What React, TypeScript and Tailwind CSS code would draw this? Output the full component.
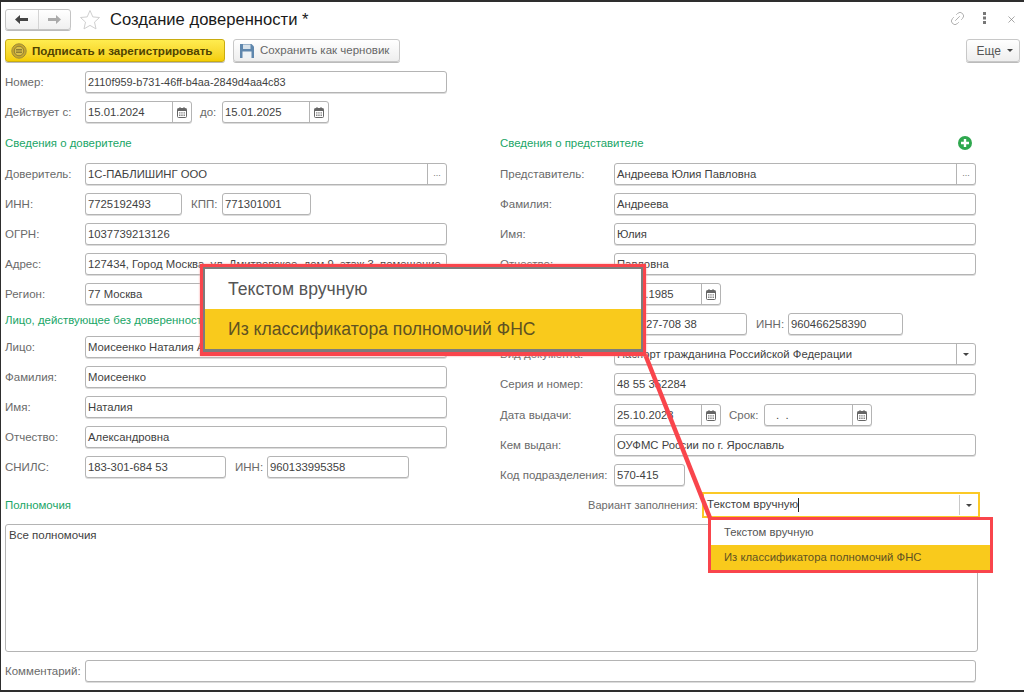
import { Link2, X } from 'lucide-react';
import { ReactNode } from 'react';

const Calendar = () => (
  <svg width="10" height="11" viewBox="0 0 10 11">
    <path d="M2.5 0h1v2h-1zM6.5 0h1v2h-1z" fill="#666" />
    <rect x="0.5" y="1.5" width="9" height="9" rx="1" fill="#fff" stroke="#666" />
    <rect x="0.5" y="1.5" width="9" height="2.5" fill="#666" />
    <path d="M2 5.2h1.5v1.3H2zM4.2 5.2h1.5v1.3H4.2zM6.5 5.2H8v1.3H6.5zM2 7.6h1.5v1.3H2zM4.2 7.6h1.5v1.3H4.2zM6.5 7.6H8v1.3H6.5z" fill="#888" />
  </svg>
);

const Caret = () => <span className="w-0 h-0 border-x-[3px] border-x-transparent border-t-[3px] border-t-[#444]" />;

const Field = ({
  value,
  className = 'flex-1',
  suffix,
  suffixClass = 'w-[19px]',
}: {
  value?: ReactNode;
  className?: string;
  suffix?: ReactNode;
  suffixClass?: string;
}) => (
  <div className={`h-[22px] flex items-stretch bg-white border border-[#b4b4b4] rounded-[3px] shadow-[0_1px_0_#dcdcdc] overflow-hidden min-w-0 ${className}`}>
    <div className="flex-1 min-w-0 px-[2px] leading-[20px] text-[11.3px] text-[#3f3f3f] whitespace-nowrap overflow-hidden">{value}</div>
    {suffix && <div className={`shrink-0 border-l border-[#b4b4b4] flex items-center justify-center ${suffixClass}`}>{suffix}</div>}
  </div>
);

const Label = ({ children, className = 'w-20' }: { children: ReactNode; className?: string }) => (
  <div className={`shrink-0 leading-[22px] text-[#6a6a6a] whitespace-nowrap ${className}`}>{children}</div>
);

const Row = ({ children, className = '' }: { children: ReactNode; className?: string }) => (
  <div className={`flex items-center h-[22px] ${className}`}>{children}</div>
);

const Section = ({ children, className = '' }: { children: ReactNode; className?: string }) => (
  <div className={`flex items-center pt-px text-[11.4px] text-[#18a566] whitespace-nowrap overflow-hidden ${className}`}>{children}</div>
);

const Dots = <span className="text-[9px] text-[#777] leading-none -mt-px">...</span>;

const Options = ({ className, big }: { className: string; big?: boolean }) => (
  <div className={`absolute bg-white ${className}`}>
    <div className={big ? 'h-[40px] pl-[23px] flex items-center text-[#555]' : 'h-[25px] pl-[13px] flex items-center text-[#555]'}>Текстом вручную</div>
    <div className={big ? 'h-[40px] pl-[23px] flex items-center bg-[#f9ca1c] text-[#5f5222]' : 'h-[25px] pl-[13px] flex items-center bg-[#f9ca1c] text-[#5f5222]'}>Из классификатора полномочий ФНС</div>
  </div>
);

export default function App() {
  return (
    <div className="relative w-[1024px] h-[692px] box-border bg-white border-t-2 border-l border-b-2 border-[#2e2e2e] px-[4px] pt-[7px] overflow-hidden font-['Liberation_Sans',Arial,sans-serif] text-[11.5px]">
      {/* header */}
      <div className="flex items-center h-[21px]">
        <div className="w-[66px] h-[21px] flex bg-gradient-to-b from-white to-[#f0f0f0] border border-[#c4c4c4] rounded-[3px] shadow-[0_1px_0_#bbb]">
          <div className="flex-1 flex items-center justify-center border-r border-[#d4d4d4]">
            <svg width="13" height="9" viewBox="0 0 13 9"><path d="M5 0v3h8v3H5v3L0 4.5z" fill="#444" /></svg>
          </div>
          <div className="flex-1 flex items-center justify-center">
            <svg width="13" height="9" viewBox="0 0 13 9"><path d="M8 0v3H0v3h8v3l5-4.5z" fill="#aaa" /></svg>
          </div>
        </div>
        <svg className="ml-[8px]" width="22" height="21" viewBox="0 0 22 21">
          <path d="M11 1.5l2.8 6.4 6.7.6-5 4.6 1.5 6.8L11 16.4l-6 3.5 1.5-6.8-5-4.6 6.7-.6z" fill="#fff" stroke="#cfcfcf" />
        </svg>
        <div className="ml-[9px] pt-px text-[16.6px] text-[#1a1a1a] whitespace-nowrap">Создание доверенности *</div>
        <div className="ml-auto flex items-center">
          <Link2 size={17} strokeWidth={1.2} className="-rotate-45 text-[#a8a8a8] -mt-[3px]" />
          <svg className="ml-[17px] -mt-[3px]" width="3" height="12" viewBox="0 0 3 12"><path d="M0 0h3v3H0zM0 4.5h3v3H0zM0 9h3v3H0z" fill="#777" /></svg>
          <X size={11} strokeWidth={1.4} className="ml-[20px] mr-[3px] text-[#777]" />
        </div>
      </div>

      {/* toolbar */}
      <div className="flex items-center mt-[9px] h-[23px]">
        <div className="w-[220px] h-[23px] flex items-center bg-gradient-to-b from-[#ffec4f] to-[#f4ce00] border border-[#c9ac10] rounded-[3px] shadow-[0_1px_0_#bbb] pl-[5px]">
          <svg width="16" height="16" viewBox="0 0 16 16">
            <circle cx="8" cy="8" r="7.2" fill="#c9a92c" stroke="#9c8a3a" />
            <circle cx="8" cy="8" r="4.8" fill="#d9bf4a" stroke="#8f7e34" />
            <path d="M5 6.5h6M5 8h6M5 9.5h6" stroke="#8f7e34" />
          </svg>
          <span className="ml-[5px] text-[11.6px] font-bold text-[#4f4300] whitespace-nowrap">Подписать и зарегистрировать</span>
        </div>
        <div className="ml-[8px] w-[167px] h-[23px] flex items-center bg-gradient-to-b from-white to-[#eeeeee] border border-[#c8c8c8] rounded-[3px] shadow-[0_1px_0_#bbb] pl-[6px]">
          <svg width="14" height="14" viewBox="0 0 14 14">
            <path d="M0 0h11.5L14 2.5V14H0z" fill="#5f87ad" />
            <rect x="3" y="0.5" width="7.5" height="4.5" fill="#d8e2ea" />
            <rect x="2.5" y="7.5" width="9" height="6.5" fill="#eef2f5" />
          </svg>
          <span className="ml-[6px] text-[#666] whitespace-nowrap">Сохранить как черновик</span>
        </div>
        <div className="ml-auto w-[54px] h-[23px] flex items-center justify-end gap-[6px] pr-[6px] text-[12px] bg-gradient-to-b from-white to-[#eeeeee] border border-[#c8c8c8] rounded-[3px] shadow-[0_1px_0_#bbb] text-[#555]">
          Еще <Caret />
        </div>
      </div>

      {/* top fields and two columns */}
      <div className="flex mt-[9px]">
        <div className="w-[442px] shrink-0 flex flex-col gap-[8px]">
          <Row><Label>Номер:</Label><Field value={<span className="text-[10.9px]">2110f959-b731-46ff-b4aa-2849d4aa4c83</span>} /></Row>
          <Row>
            <Label>Действует с:</Label>
            <Field className="w-[107px]" value="15.01.2024" suffix={<Calendar />} />
            <Label className="ml-[8px] w-[22px]">до:</Label>
            <Field className="w-[107px]" value="15.01.2025" suffix={<Calendar />} />
          </Row>
          <Section className="h-[24px]">Сведения о доверителе</Section>
          <Row><Label>Доверитель:</Label><Field value="1С-ПАБЛИШИНГ ООО" suffix={Dots} /></Row>
          <Row>
            <Label>ИНН:</Label>
            <Field className="w-[97px]" value="7725192493" />
            <Label className="ml-[9px] w-[31px]">КПП:</Label>
            <Field className="w-[89px]" value="771301001" />
          </Row>
          <Row><Label>ОГРН:</Label><Field value="1037739213126" /></Row>
          <Row><Label>Адрес:</Label><Field value="127434, Город Москва, ул. Дмитровское, дом 9, этаж 3, помещение" /></Row>
          <Row><Label>Регион:</Label><Field value="77 Москва" /></Row>
          <Section className="h-[15px]">Лицо, действующее без доверенности</Section>
          <Row><Label>Лицо:</Label><Field value="Моисеенко Наталия Александровна" /></Row>
          <Row><Label>Фамилия:</Label><Field value="Моисеенко" /></Row>
          <Row><Label>Имя:</Label><Field value="Наталия" /></Row>
          <Row><Label>Отчество:</Label><Field value="Александровна" /></Row>
          <Row>
            <Label>СНИЛС:</Label>
            <Field className="w-[141px]" value="183-301-684 53" />
            <Label className="ml-[9px] w-[32px]">ИНН:</Label>
            <Field className="w-[142px]" value="960133995358" />
          </Row>
        </div>

        <div className="ml-[53px] w-[476px] shrink-0 flex flex-col gap-[8px] mt-[60px]">
          <Section className="h-[24px] justify-between pr-[4px]">
            Сведения о представителе
            <svg className="-mt-[2px]" width="14" height="14" viewBox="0 0 14 14">
              <circle cx="7" cy="7" r="7" fill="#2fa84f" />
              <path d="M5.8 3h2.4v2.8H11v2.4H8.2V11H5.8V8.2H3V5.8h2.8z" fill="#fff" />
            </svg>
          </Section>
          <Row><Label className="w-[114px]">Представитель:</Label><Field value="Андреева Юлия Павловна" suffix={Dots} /></Row>
          <Row><Label className="w-[114px]">Фамилия:</Label><Field value="Андреева" /></Row>
          <Row><Label className="w-[114px]">Имя:</Label><Field value="Юлия" /></Row>
          <Row><Label className="w-[114px]">Отчество:</Label><Field value="Павловна" /></Row>
          <Row><Label className="w-[114px]">Дата рождения:</Label><Field className="w-[107px]" value="12.03.1985" suffix={<Calendar />} /></Row>
          <Row>
            <Label className="w-[114px]">СНИЛС:</Label>
            <Field className="w-[133px]" value="121-427-708 38" />
            <Label className="ml-[9px] w-[32px]">ИНН:</Label>
            <Field className="w-[115px]" value="960466258390" />
          </Row>
          <Row><Label className="w-[114px]">Вид документа:</Label><Field value="Паспорт гражданина Российской Федерации" suffix={<Caret />} /></Row>
          <Row><Label className="w-[114px]">Серия и номер:</Label><Field value="48 55 352284" /></Row>
          <Row className="mt-px">
            <Label className="w-[114px]">Дата выдачи:</Label>
            <Field className="w-[107px]" value="25.10.2023" suffix={<Calendar />} />
            <Label className="ml-[8px] w-[35px]">Срок:</Label>
            <Field className="w-[108px]" value={<span className="pl-[9px]">.&nbsp;&nbsp;.</span>} suffix={<Calendar />} />
          </Row>
          <Row><Label className="w-[114px]">Кем выдан:</Label><Field value="ОУФМС России по г. Ярославль" /></Row>
          <Row><Label className="w-[114px]">Код подразделения:</Label><Field className="w-[71px]" value="570-415" /></Row>
        </div>
      </div>

      {/* Полномочия */}
      <div className="flex items-center h-[26px] mt-[6px]">
        <Section>Полномочия</Section>
        <Label className="ml-auto w-[114px] text-[11.1px]">Вариант заполнения:</Label>
        <div className="w-[278px] h-[26px] mr-[40px] flex items-stretch border-2 border-[#fbc926] bg-white">
          <div className="flex-1 pl-[3px] text-[11.5px] text-[#3f3f3f] whitespace-nowrap flex items-center">
            Текстом вручную<span className="w-px h-[14px] bg-[#222]" />
          </div>
          <div className="w-[19px] my-[1px] border-l border-[#c8c8c8] flex items-center justify-center"><Caret /></div>
        </div>
      </div>
      <div className="mt-[6px] w-[973px] h-[128px] bg-white border border-[#b4b4b4] rounded-[3px] px-[3px] pt-[2px] text-[#3f3f3f]">Все полномочия</div>
      <Row className="mt-[8px] w-[971px]">
        <Label>Комментарий:</Label>
        <Field />
      </Row>

      {/* pointer line between the dropdown and its magnified copy */}
      <svg className="absolute left-[-1px] top-[-2px] pointer-events-none" width="1024" height="692">
        <path d="M645 354L710 518" stroke="#f9454c" strokeWidth="4.5" fill="none" />
      </svg>

      {/* magnified copy */}
      <div className="absolute left-[199px] top-[262px] w-[446px] h-[92px] border-[3px] border-b-[4px] border-[#f9454c] shadow-[0_0_2px_#f9a0a0]">
        <div className="relative w-full h-full border-2 border-b-[3px] border-[#7c7c7c]">
          <Options big className="inset-0 text-[17.6px]" />
        </div>
      </div>

      {/* dropdown */}
      <div className="absolute left-[707px] top-[515px] w-[285px] h-[56px] border-[3px] border-[#f9454c]">
        <Options className="inset-0 text-[11.3px]" />
      </div>
    </div>
  );
}
